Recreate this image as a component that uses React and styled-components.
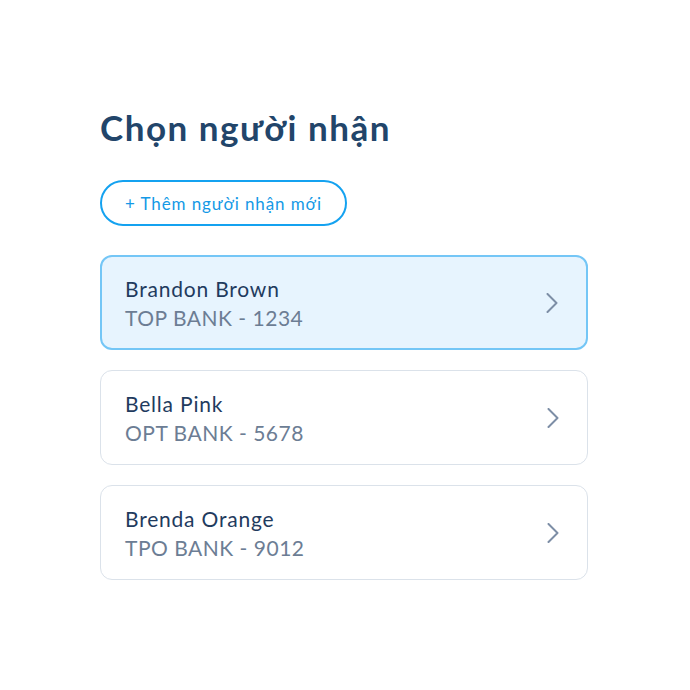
import React from 'react';
import styled, { createGlobalStyle } from 'styled-components';

const recipients = [
  { name: 'Brandon Brown', bank: 'TOP BANK - 1234', active: true },
  { name: 'Bella Pink', bank: 'OPT BANK - 5678' },
  { name: 'Brenda Orange', bank: 'TPO BANK - 9012' },
];

const GlobalStyle = createGlobalStyle`
  body {
    margin: 0;
    background: #fff;
    font-family: 'Lato', 'Noto Sans', sans-serif;
  }
`;

const Page = styled.div`
  width: 690px;
  height: 690px;
  padding: 104px 102px 0 100px;
  box-sizing: border-box;
`;

const Title = styled.h1`
  margin: 0;
  font-size: 35px;
  line-height: 46px;
  font-weight: 700;
  color: #22456a;
  letter-spacing: 1.5px;
`;

const AddButton = styled.button`
  display: block;
  margin-top: 30px;
  height: 46px;
  padding: 0 23px;
  border: 2px solid #14a2f0;
  border-radius: 23px;
  background: #fff;
  color: #1499e6;
  font-family: inherit;
  font-size: 17px;
  letter-spacing: 0.9px;
  cursor: pointer;
`;

const List = styled.div`
  margin-top: 29px;
  display: flex;
  flex-direction: column;
  gap: 20px;
`;

const Card = styled.div`
  display: flex;
  align-items: center;
  justify-content: space-between;
  height: 95px;
  box-sizing: border-box;
  padding: 0 28px 0 24px;
  border-radius: 12px;
  border: ${p => (p.$active ? '2px solid #74c6f6' : '1px solid #dbe2ea')};
  background: ${p => (p.$active ? '#e7f4fe' : '#fff')};
  padding-left: ${p => (p.$active ? '23px' : '24px')};
`;

const Info = styled.div`
  display: flex;
  flex-direction: column;
`;

const Name = styled.div`
  font-size: 21px;
  line-height: 29px;
  color: #1f3b5e;
  letter-spacing: 0.8px;
`;

const Bank = styled.div`
  font-size: 21px;
  line-height: 29px;
  color: #6c7d94;
  letter-spacing: 0.5px;
`;

const Chevron = () => (
  <svg width="12" height="20" viewBox="0 0 12 20" fill="none">
    <path d="M1.5 1l9 9-9 9" stroke="#7d8ea6" strokeWidth="2" strokeLinecap="round" strokeLinejoin="round" />
  </svg>
);

export default function App() {
  return (
    <Page>
      <GlobalStyle />
      <Title>Chọn người nhận</Title>
      <AddButton>+ Thêm người nhận mới</AddButton>
      <List>
        {recipients.map(r => (
          <Card key={r.name} $active={r.active}>
            <Info>
              <Name>{r.name}</Name>
              <Bank>{r.bank}</Bank>
            </Info>
            <Chevron />
          </Card>
        ))}
      </List>
    </Page>
  );
}
